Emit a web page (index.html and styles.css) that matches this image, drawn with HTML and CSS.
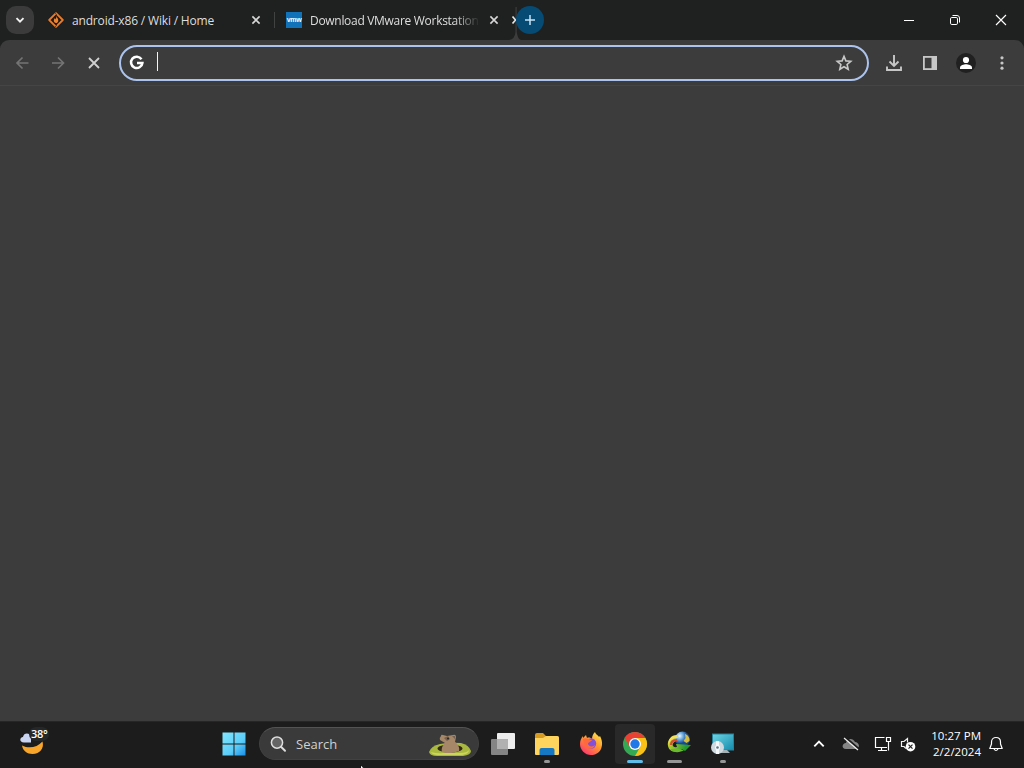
FILE: index.html
```html
<!DOCTYPE html>
<html lang="en">
<head>
<meta charset="utf-8">
<title>Browser</title>
<link rel="stylesheet" href="styles.css">
</head>
<body>
<div class="desktop">
  <header class="tabstrip">
    <button class="tab-search" aria-label="Search tabs"><svg width="28" height="28" viewBox="0 0 28 28"><path d="M10.500 12.200l3.500 3.500 3.500-3.500" fill="none" stroke="#f2f2f2" stroke-width="1.900"/></svg></button>
    <div class="tab tab-first">
      <svg class="favicon" width="16" height="16" viewBox="0 0 16 16"><path d="M8 1.200L14.800 8 8 14.800 1.200 8z" fill="#21180f" stroke="#e87c2c" stroke-width="1.800" stroke-linejoin="round"/><path d="M8.300 3.700c.2 1.800 2 2.700 2 4.700 0 1.500-1 2.600-2.300 2.600s-2.200-1-2.200-2.400c0-1.200.7-2 1.200-2.600l.5 1.400c.8-1.100.9-2.200.8-3.700z" fill="#f08431"/><path d="M7.300 1.300l1.400 1.300M8.700 13.400l-1.400 1.300" stroke="#21180f" stroke-width=".8"/></svg>
      <span class="tab-title">android-x86 / Wiki / Home</span>
      <svg class="tab-close" width="16" height="16" viewBox="0 0 16 16"><path d="M4.400 4.400l7.200 7.200M11.600 4.400l-7.200 7.200" stroke="#d7d7d7" stroke-width="1.600"/></svg>
    </div>
    <div class="tab tab-second">
      <span class="vmw">vmw</span>
      <span class="tab-title fading">Download VMware Workstation</span>
      <svg class="tab-close" width="16" height="16" viewBox="0 0 16 16"><path d="M4.400 4.400l7.200 7.200M11.600 4.400l-7.200 7.200" stroke="#d7d7d7" stroke-width="1.600"/></svg>
    </div>
    <svg class="opening-tab" width="16" height="40" viewBox="0 0 16 40"><path d="M4 40q6-1 6.500-8V7h1.200v25q1 7 4.300 8z" fill="#3c3c3c"/><path d="M7.500 16.500L10.500 20l-3 3.500" fill="none" stroke="#e4e4e4" stroke-width="1.700"/></svg>
    <button class="new-tab" aria-label="New tab"><svg width="28" height="28" viewBox="0 0 28 28"><path d="M14 9v10M9 14h10" stroke="#c7e4f5" stroke-width="1.500"/></svg></button>
    <div class="window-controls">
      <svg viewBox="0 0 46 40"><path d="M18 20.500h10" stroke="#fff"/></svg>
      <svg viewBox="0 0 46 40"><g fill="none" stroke="#fff"><rect x="18.500" y="17.500" width="7" height="7" rx="1.300"/><path d="M20.500 15.500h4.500q2.500 0 2.500 2.500v4.500"/></g></svg>
      <svg viewBox="0 0 46 40"><path d="M18 15l10 10M28 15l-10 10" stroke="#fff" stroke-width="1.150"/></svg>
    </div>
  </header>

  <nav class="toolbar">
    <svg class="tool" viewBox="0 0 36 36"><path d="M24.500 18H13M18.500 12.500L13 18l5.500 5.500" fill="none" stroke="#747474" stroke-width="1.700"/></svg>
    <svg class="tool" viewBox="0 0 36 36"><path d="M12 18h11M18 12.500l5.500 5.500-5.500 5.500" fill="none" stroke="#747474" stroke-width="1.700"/></svg>
    <svg class="tool" viewBox="0 0 36 36"><path d="M13 13l10 10M23 13L13 23" stroke="#d0d0d0" stroke-width="1.800"/></svg>
    <div class="omnibox">
      <svg width="16" height="16" viewBox="0 0 16 16"><path d="M12.500 4.200A5.700 5.700 0 1 0 13.400 8H8" fill="none" stroke="#fff" stroke-width="2.500"/></svg>
      <span class="caret"></span>
      <svg class="star" width="18" height="18" viewBox="0 0 18 18"><path d="M9 2.400l1.900 4.500 4.900.4-3.700 3.200 1.100 4.800L9 12.800l-4.200 2.500 1.100-4.800-3.700-3.200 4.900-.4z" fill="none" stroke="#c8c8c8" stroke-width="1.600"/></svg>
    </div>
    <svg class="tool" viewBox="0 0 36 36"><path d="M18 10v10.500M13.500 16.500l4.500 4.500 4.500-4.500M11 21.500V25h14v-3.500" fill="none" stroke="#c7c7c7" stroke-width="1.900"/></svg>
    <svg class="tool" viewBox="0 0 36 36"><rect x="11.900" y="11.900" width="12.200" height="12.200" fill="none" stroke="#c7c7c7" stroke-width="1.800"/><path d="M19.500 12H25v12h-5.500z" fill="#c7c7c7"/></svg>
    <svg class="tool" viewBox="0 0 36 36"><circle cx="18" cy="18" r="10" fill="#202020"/><circle cx="18" cy="15" r="3.100" fill="#fff"/><path d="M12 24v-1.500c0-2.300 4-3.200 6-3.200s6 .9 6 3.200V24z" fill="#fff"/></svg>
    <svg class="tool" viewBox="0 0 36 36"><g fill="#c7c7c7"><circle cx="18" cy="12.800" r="1.600"/><circle cx="18" cy="18" r="1.600"/><circle cx="18" cy="23.200" r="1.600"/></g></svg>
  </nav>

  <main class="page"></main>

  <footer class="taskbar">
    <div class="weather">
      <svg width="32" height="34" viewBox="0 0 32 34"><path d="M2 18.500c7 3.500 15 2 20.500-4C24.500 21 20 27 12.500 27 7 27 3 24 2 18.500z" fill="#f7a52b"/><path d="M4 15.500C-1 15.500-.5 10.500 3 10 4 4.500 11 6 11 10.500v5z" fill="#c9d5f3"/></svg>
      <span class="temperature">38°</span>
    </div>
    <svg class="start" width="24" height="24" viewBox="0 0 24 24"><defs><linearGradient id="win" x1="0" y1="0" x2="24" y2="24" gradientUnits="userSpaceOnUse"><stop stop-color="#83e7ff"/><stop offset=".6" stop-color="#5bcdf9"/><stop offset="1" stop-color="#1689e8"/></linearGradient></defs><path d="M.5.500h11v11H.5zM12.500.500h11v11h-11zM.5 12.500h11v11H.5zM12.500 12.500h11v11h-11z" fill="url(#win)"/></svg>
    <div class="search">
      <svg width="18" height="18" viewBox="0 0 18 18"><circle cx="8" cy="7.600" r="5.600" fill="#646464" stroke="#dedede" stroke-width="1.500"/><path d="M12 11.800l4 4" stroke="#dedede" stroke-width="2" stroke-linecap="round"/></svg>
      <span class="search-label">Search</span>
      <svg class="groundhog" width="44" height="24" viewBox="0 0 44 24"><path d="M1 19Q3 13 12 11q10-2 21-1 8 2 10 8 0 4-8 5H9q-7 0-8-4z" fill="#a9b83f"/><path d="M3 19q7 2 12 1h17q7 0 9-3 0 4-7 5H10q-6 0-7-3z" fill="#cad75a"/><ellipse cx="22" cy="15.500" rx="12.500" ry="4" fill="#342b17"/><path d="M14 19c-1-4 1-7 3-9l-5-3q-1-2 1-4 0-2 2-1l4 1 6-1q3-1 3 2l-1 5c3 2 5 6 4 9-4 2-13 3-17 1z" fill="#a68767"/><path d="M16 5l4-2 2 3-3 2zM24 3l3 0v3z" fill="#756052"/><circle cx="20" cy="5.500" r="1" fill="#292522"/></svg>
    </div>
    <div class="apps">
      <div class="app"><svg viewBox="0 0 40 40"><rect x="14" y="9" width="18" height="16" rx="1" fill="#eeeeee"/><rect x="8" y="15" width="17" height="16" rx="1" fill="#858585"/><path d="M14 15h11v10H14z" fill="#b1b1b1"/></svg></div>
      <div class="app"><svg viewBox="0 0 40 40"><path d="M8 11q0-2 2-2h6l3 3h11q2 0 2 2v4H8z" fill="#d79b21"/><path d="M8 14h8l3-2h11q2 0 2 2v16q0 1-1 1H9q-1 0-1-1z" fill="#ffd45e"/><path d="M12.500 31v-5q0-2 2-2h11q2 0 2 2v5z" fill="#1678c2"/></svg><span class="indicator"></span></div>
      <div class="app"><svg viewBox="0 0 40 40"><defs><linearGradient id="fox" x1="28" y1="9" x2="13" y2="30" gradientUnits="userSpaceOnUse"><stop stop-color="#ffe34c"/><stop offset=".45" stop-color="#ff982e"/><stop offset="1" stop-color="#ff356f"/></linearGradient></defs><path d="M24 8c1 3 3 3 4 5l1-1c2 4 3 8 1 13-2 4-6 6-10 6-6 0-11-5-11-11 0-3 1-6 3-8v2l3-3 1 3c2-1 4 0 5 1 0-3 1-5 3-7z" fill="url(#fox)"/><circle cx="20" cy="19.500" r="5.200" fill="#8550d8"/><path d="M12 15c4-2 6 1 9 1-1 2-4 2-4 4 1 3 5 3 7 1-1 4-6 5-9 2-2-2-3-5-3-8z" fill="#ff6a3d"/></svg></div>
      <div class="app active"><svg viewBox="0 0 40 40"><circle cx="20" cy="20" r="12" fill="#35a853"/><path d="M20 20L9.600 14A12 12 0 0 1 30.400 14z" fill="#e94235"/><path d="M20 14h10.400A12 12 0 0 1 20 32l5.200-9z" fill="#fbc116"/><path d="M9.600 14l5.200 9 5.200-9z" fill="#e94235"/><circle cx="20" cy="20" r="6" fill="#fff"/><circle cx="20" cy="20" r="4.700" fill="#2378e8"/></svg><span class="indicator current"></span></div>
      <div class="app"><svg viewBox="0 0 40 40"><defs><radialGradient id="globe" cx=".3" cy=".3"><stop stop-color="#eff8ff"/><stop offset=".5" stop-color="#6aa9dc"/><stop offset="1" stop-color="#174893"/></radialGradient><linearGradient id="ribbon" x1="9" y1="20" x2="26" y2="25" gradientUnits="userSpaceOnUse"><stop stop-color="#c3d52d"/><stop offset="1" stop-color="#249b32"/></linearGradient></defs><circle cx="23.500" cy="15" r="7.500" fill="url(#globe)"/><path d="M26 10c3 1 5 4 4.500 7l-3 2-3-2 2-3z" fill="#d5bd42"/><path d="M17 12c-6 1-9 5-8 10 1 5 6 7 12 5l2-2 3 2 6-6-15-1 1 3c-5 1-6-4-1-6z" fill="url(#ribbon)"/><path d="M18 11c-6 0-10 5-8 10 0-4 4-7 9-7z" fill="#f0df60"/><path d="M12 21c0-4 3-5 6-5" fill="none" stroke="#d84a35" stroke-width="2.200"/><path d="M11 25c3 4 10 4 14 1l-6-1z" fill="#68bb2d"/></svg><span class="indicator wide"></span></div>
      <div class="app"><svg viewBox="0 0 40 40"><defs><linearGradient id="screen" x1="0" y1="0" x2="1" y2="1"><stop stop-color="#70d6e4"/><stop offset="1" stop-color="#148bad"/></linearGradient></defs><rect x="9.500" y="10" width="21" height="16" fill="url(#screen)" stroke="#268199"/><path d="M18 26h6l3 3h-9z" fill="#a5b1b5"/><circle cx="14.500" cy="23.500" r="6.500" fill="#cfdae0"/><path d="M14.500 17v13" stroke="#f4f8fb" stroke-width="3"/><circle cx="14.500" cy="23.500" r="2.500" fill="#f5f8fa"/><circle cx="14.500" cy="23.500" r="1.300" fill="#58788a"/></svg><span class="indicator"></span></div>
    </div>
    <div class="tray">
      <svg class="tray-up" width="16" height="18" viewBox="0 0 16 18"><path d="M3.300 11.400L8 6.700l4.700 4.700" fill="none" stroke="#fff" stroke-width="1.900"/></svg>
      <svg class="tray-cloud" width="20" height="18" viewBox="0 0 20 18"><path d="M5 14c-5 0-4-6 0-6C6 3 12 3 14 7c4 0 6 6 1 7z" fill="#858585"/><path d="M4 2l14 12" stroke="#1c1c1c" stroke-width="2"/><path d="M3 3l14 12" stroke="#ededed" stroke-width="1.200"/></svg>
      <svg class="tray-net" width="18" height="18" viewBox="0 0 18 18"><g fill="none" stroke="#fff" stroke-width="1.200"><path d="M10.500 2.500H1.500v10h11.500M7.500 12.500v3M4 15.500h9"/><path d="M12.500 2.500h4v4h-4zM14.500 6.500v9"/></g></svg>
      <svg class="tray-sound" width="18" height="18" viewBox="0 0 18 18"><path d="M8.500 7.500v-4L5 6.500H2.500v5H5l2 2" fill="none" stroke="#f2f2f2" stroke-width="1.200"/><circle cx="11.500" cy="11.700" r="4.800" fill="#fff"/><path d="M9.500 9.700l4 4M13.500 9.700l-4 4" stroke="#222" stroke-width="1.200"/></svg>
      <div class="clock"><span>10:27 PM</span><span>2/2/2024</span></div>
      <svg class="bell" width="16" height="18" viewBox="0 0 16 18"><path d="M3.500 9V7c0-6 9-6 9 0v2l1.700 4.500H1.800z" fill="none" stroke="#fff" stroke-width="1.200" stroke-linejoin="round"/><path d="M6 14q2 3 4 0" fill="none" stroke="#fff" stroke-width="1.200"/></svg>
    </div>
  </footer>
  <svg class="pointer" width="10" height="16" viewBox="0 0 10 16"><path d="M.5.500v12l3-3h5z" fill="#fff" stroke="#161616"/></svg>
</div>
</body>
</html>
```

FILE: styles.css
```css
* { box-sizing: border-box; }
body { margin: 0; background: #3c3c3c; font-family: "Open Sans", "Noto Sans", sans-serif; }
svg { display: block; flex: none; }
button { padding: 0; border: 0; flex: none; }
.desktop { position: relative; display: flex; flex-direction: column; width: 1024px; height: 768px; overflow: hidden; background: linear-gradient(#1f2020 50px, #3c3c3c 50px); }
.tabstrip { display: flex; align-items: center; height: 40px; flex: none; }
.tab-search { width: 28px; height: 28px; margin-left: 6px; border-radius: 10px; background: #3b3b3b; }
.tab { display: flex; align-items: center; height: 40px; flex: none; color: #dedede; font-size: 12px; letter-spacing: -.17px; }
.tab-first { width: 241px; padding-left: 14px; background: linear-gradient(#414242, #414242) right 0 center / 1px 16px no-repeat; }
.tab-second { width: 229px; padding-left: 11px; }
.tab-title { width: 172px; height: 20px; margin-left: 8px; line-height: 21px; white-space: nowrap; }
.tab-close { margin-left: 4px; }
.fading { letter-spacing: -.3px; -webkit-mask-image: linear-gradient(90deg, #000 144px, transparent 170px); mask-image: linear-gradient(90deg, #000 144px, transparent 170px); }
.vmw { width: 16px; height: 16px; background: #1171b9; color: #fff; font: bold 7px/15px "Liberation Sans", sans-serif; letter-spacing: -.3px; text-align: center; }
.opening-tab { margin-left: 1px; }
.new-tab { width: 28px; height: 28px; margin-left: -5px; border-radius: 50%; background: #064b74; }
.window-controls { display: flex; margin-left: auto; }
.window-controls svg { width: 46px; height: 40px; }
.toolbar { display: flex; align-items: center; height: 46px; flex: none; padding: 0 4px; background: #3c3c3c; border-bottom: 1px solid #454545; border-radius: 9px 9px 0 0; }
.tool { width: 36px; height: 36px; }
.omnibox { display: flex; align-items: center; width: 750px; height: 36px; margin: 0 7px; border: 2px solid #abc3ed; border-radius: 18px; padding: 0 14px 0 8px; }
.caret { width: 1px; height: 19px; margin: -2px 0 0 12px; background: #f4f4f4; }
.star { margin-left: auto; }
.page { flex: 1; background: #3c3c3c; }
.taskbar { display: flex; align-items: center; height: 47px; padding-bottom: 3px; flex: none; background: #1c1c1c; border-top: 1px solid #262626; }
.weather { position: relative; width: 32px; height: 34px; margin: 1px 0 0 20px; }
.temperature { position: absolute; left: 9px; top: 0; padding: 0 2px; border-radius: 8px; background: #242829; color: #fff; font-size: 11px; font-weight: 600; line-height: 14px; letter-spacing: -.3px; }
.start { margin-left: 170px; }
.search { display: flex; align-items: center; width: 220px; height: 33px; margin-left: 13px; padding: 0 6px 0 9px; background: #3a3a3a; border: 1px solid #414141; border-top-color: #535353; border-radius: 17px; }
.search-label { margin-left: 9px; font-size: 13px; line-height: 18px; color: #d1d1d1; }
.groundhog { margin: 3px 0 0 auto; }
.apps { display: flex; gap: 4px; margin-left: 4px; }
.app { position: relative; width: 40px; height: 40px; border-radius: 4px; }
.app svg { width: 40px; height: 40px; }
.active { background: #292929; }
.indicator { position: absolute; left: 17px; bottom: 1px; width: 6px; height: 3px; border-radius: 2px; background: #969696; }
.current { left: 12px; width: 16px; background: #60bce9; }
.wide { left: 8px; width: 15px; }
.tray { display: flex; align-items: center; margin-left: auto; padding-right: 20px; }
.tray-cloud { margin-left: 14px; }
.tray-net { margin-left: 13px; }
.tray-sound { margin-left: 7px; }
.clock { display: flex; flex-direction: column; width: 55px; margin-left: 9px; color: #fff; font-size: 11.5px; line-height: 16px; letter-spacing: .02px; text-align: right; white-space: nowrap; }
.bell { margin-left: 7px; }
.pointer { position: absolute; left: 360px; top: 764px; }
```
